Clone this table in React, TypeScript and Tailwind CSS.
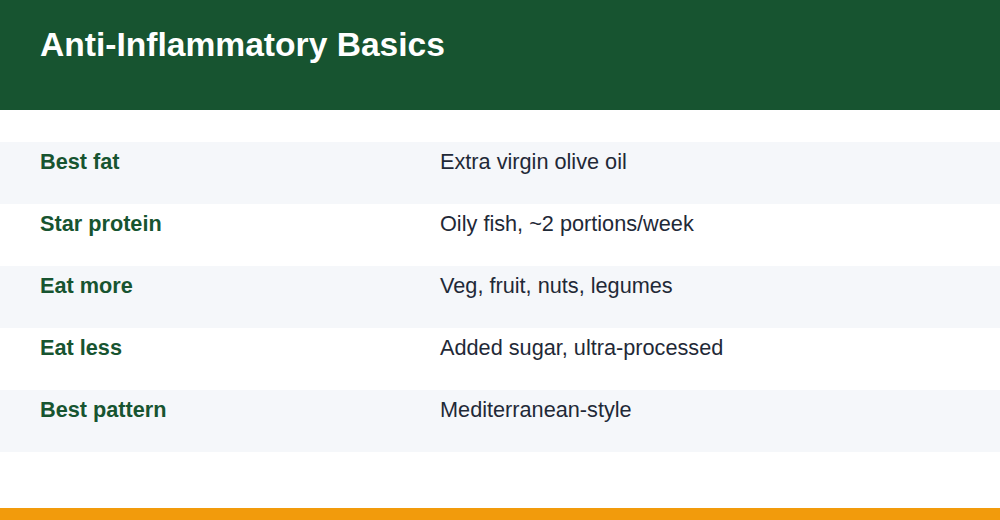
import React from 'react';

const rows = [
  { label: 'Best fat', value: 'Extra virgin olive oil' },
  { label: 'Star protein', value: 'Oily fish, ~2 portions/week' },
  { label: 'Eat more', value: 'Veg, fruit, nuts, legumes' },
  { label: 'Eat less', value: 'Added sugar, ultra-processed' },
  { label: 'Best pattern', value: 'Mediterranean-style' },
];

const App: React.FC = () => {
  return (
    <div className="w-[1000px] h-[520px] flex flex-col bg-white font-['Liberation_Sans',Arial,sans-serif] overflow-hidden">
      {/* header */}
      <div className="h-[110px] bg-[#175430] px-10 pt-[25px] shrink-0">
        <h1 className="text-[33.6px] leading-[40px] font-bold text-white">Anti-Inflammatory Basics</h1>
      </div>

      <div className="mt-8 flex flex-col">
        {rows.map((r, i) => (
          <div
            key={r.label}
            className={`grid grid-cols-[400px_1fr] h-[62px] px-10 pt-2 ${i % 2 === 0 ? 'bg-[#f5f7fa]' : 'bg-white'}`}
          >
            <div className="text-[21.7px] leading-[24px] font-bold text-[#175430]">{r.label}</div>
            <div className="text-[21.7px] leading-[24px] text-[#1f2937]">{r.value}</div>
          </div>
        ))}
      </div>

      <div className="flex-1" />
      <div className="h-3 bg-[#f29b0c] shrink-0" />
    </div>
  );
};

export default App;
